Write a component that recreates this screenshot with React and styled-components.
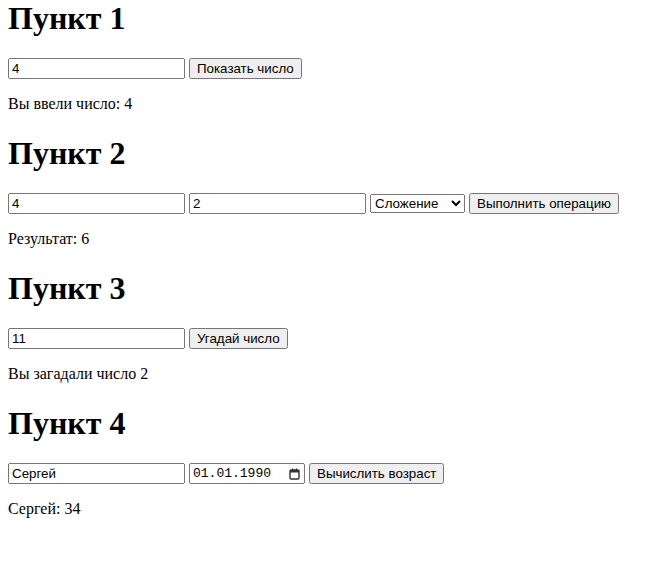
import React, { useState } from "react";
import styled, { createGlobalStyle } from "styled-components";

const GlobalStyle = createGlobalStyle`
  body {
    margin: 0 8px 8px;
    font-family: "Liberation Serif", "Times New Roman", serif;
    font-size: 16px;
    color: #000;
    background: #fff;
  }
`;

const Section = styled.section`
  &:first-child h1 {
    margin-top: 0;
  }
`;

const Title = styled.h1`
  font-size: 2em;
  font-weight: bold;
  margin: 0.67em 0;
`;

const Row = styled.div`
  display: flex;
  align-items: center;
  gap: 4px;
`;

const TextInput = styled.input`
  font-family: "Liberation Sans", Arial, sans-serif;
  font-size: 13.33px;
  width: 177px;
  height: 21px;
  box-sizing: border-box;
  margin: 0;
`;

const Button = styled.button`
  font-family: "Liberation Sans", Arial, sans-serif;
  font-size: 13.33px;
  height: 21px;
  box-sizing: border-box;
  margin: 0;
  padding: 1px 6px;
`;

const Select = styled.select`
  font-family: "Liberation Sans", Arial, sans-serif;
  font-size: 13.33px;
  width: 95px;
  height: 19px;
  box-sizing: border-box;
  margin: 0;
`;

const DateField = styled.label`
  display: inline-flex;
  align-items: center;
  justify-content: space-between;
  width: 116px;
  height: 21px;
  box-sizing: border-box;
  padding: 0 4px 0 3px;
  border: 1px solid #767676;
  border-radius: 2px;
  background: #fff;
  font-family: "Liberation Mono", "DejaVu Sans Mono", monospace;
  font-size: 13px;
  color: #000;
`;

const Result = styled.p`
  margin: 16px 0;
`;

const CalendarIcon = () => (
  <svg width="11" height="12" viewBox="0 0 11 12" aria-hidden="true">
    <rect x="1" y="2" width="9" height="9" rx="1" fill="none" stroke="#333" strokeWidth="1.4" />
    <rect x="1" y="2" width="9" height="2.5" fill="#333" />
    <rect x="3" y="0.5" width="1.2" height="2" fill="#333" />
    <rect x="6.8" y="0.5" width="1.2" height="2" fill="#333" />
  </svg>
);

export default function App() {
  const [num, setNum] = useState("4");
  const [a, setA] = useState("4");
  const [b, setB] = useState("2");
  const [op, setOp] = useState("add");
  const [guess, setGuess] = useState("11");
  const [name, setName] = useState("Сергей");

  return (
    <>
      <GlobalStyle />
      <Section>
        <Title>Пункт 1</Title>
        <Row>
          <TextInput value={num} onChange={(e) => setNum(e.target.value)} />
          <Button>Показать число</Button>
        </Row>
        <Result>Вы ввели число: 4</Result>
      </Section>
      <Section>
        <Title>Пункт 2</Title>
        <Row>
          <TextInput value={a} onChange={(e) => setA(e.target.value)} />
          <TextInput value={b} onChange={(e) => setB(e.target.value)} />
          <Select value={op} onChange={(e) => setOp(e.target.value)}>
            <option value="add">Сложение</option>
            <option value="sub">Вычитание</option>
            <option value="mul">Умножение</option>
            <option value="div">Деление</option>
          </Select>
          <Button>Выполнить операцию</Button>
        </Row>
        <Result>Результат: 6</Result>
      </Section>
      <Section>
        <Title>Пункт 3</Title>
        <Row>
          <TextInput value={guess} onChange={(e) => setGuess(e.target.value)} />
          <Button>Угадай число</Button>
        </Row>
        <Result>Вы загадали число 2</Result>
      </Section>
      <Section>
        <Title>Пункт 4</Title>
        <Row>
          <TextInput value={name} onChange={(e) => setName(e.target.value)} />
          <DateField>
            <span>01.01.1990</span>
            <CalendarIcon />
          </DateField>
          <Button>Вычислить возраст</Button>
        </Row>
        <Result>Сергей: 34</Result>
      </Section>
    </>
  );
}
